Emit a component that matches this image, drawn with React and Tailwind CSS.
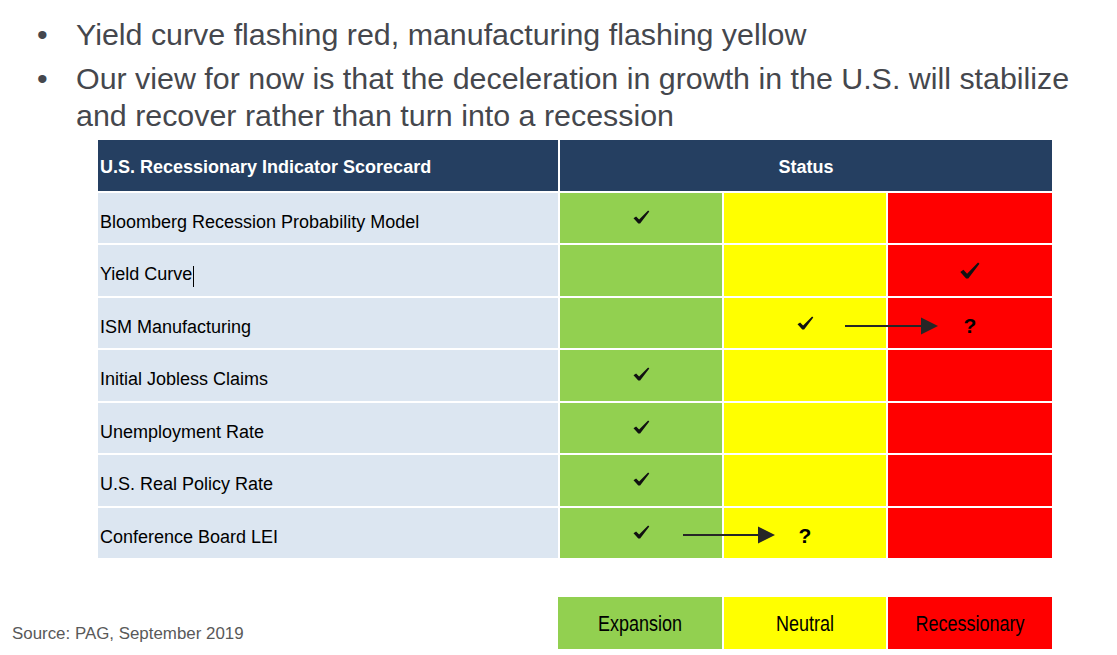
import React from "react";

const Check = ({ big }) => (
  <svg
    width={big ? 20 : 17}
    height={big ? 17 : 14}
    viewBox="0 0 16 14"
    className="block"
  >
    <path d="M0 8.2 L2.6 6.4 L5.6 9.6 L14.6 0.4 L15.8 1.4 L6.6 13.6 L4.8 13.6 Z" fill="#111" />
  </svg>
);

const Arrow = ({ left, top, width }) => (
  <svg
    className="absolute"
    style={{ left, top }}
    width={width}
    height={18}
    viewBox={`0 0 ${width} 18`}
  >
    <line x1="0" y1="9" x2={width - 16} y2="9" stroke="#262626" strokeWidth="2" />
    <polygon points={`${width - 17},0.5 ${width},9 ${width - 17},17.5`} fill="#262626" />
  </svg>
);

const Q = () => (
  <span className="mt-[4px] font-bold text-[21px] leading-none text-black">?</span>
);

const rows = [
  { label: "Bloomberg Recession Probability Model", h: "h-[50px]", g: <Check /> },
  { label: "Yield Curve", h: "h-[51px]", r: <Check big />, cursor: true },
  { label: "ISM Manufacturing", h: "h-[50px]", y: <Check />, r: <Q />, arrow: { left: 747, top: 19, width: 93 } },
  { label: "Initial Jobless Claims", h: "h-[51px]", g: <Check /> },
  { label: "Unemployment Rate", h: "h-[50px]", g: <Check /> },
  { label: "U.S. Real Policy Rate", h: "h-[51px]", g: <Check /> },
  { label: "Conference Board LEI", h: "h-[50px]", g: <Check />, y: <Q />, arrow: { left: 585, top: 18, width: 92 } },
];

export default function App() {
  return (
    <div className="w-[1117px] h-[655px] bg-white overflow-hidden font-['Liberation_Sans',Arial,sans-serif]">
      {/* bullets */}
      <div className="pt-[16px] text-[30.4px] text-[#45474d]">
        <div className="flex leading-[36px]">
          <span className="w-[76px] pl-[37px] shrink-0">•</span>
          <span className="w-[1020px]">Yield curve flashing red, manufacturing flashing yellow</span>
        </div>
        <div className="flex mt-[8px] leading-[37px]">
          <span className="w-[76px] pl-[37px] shrink-0">•</span>
          <span className="w-[1020px]">
            Our view for now is that the deceleration in growth in the U.S. will stabilize and recover rather than turn into a recession
          </span>
        </div>
      </div>

      {/* table */}
      <div className="ml-[98px] mt-[6px] flex flex-col gap-[2px] w-[954px]">
        <div className="grid grid-cols-[460px_492px] gap-[2px] h-[51px]">
          <div className="bg-[#253F61] flex items-center pl-[2px] pt-[3px] text-white font-bold text-[18px]">
            U.S. Recessionary Indicator Scorecard
          </div>
          <div className="bg-[#253F61] flex items-center justify-center pt-[3px] text-white font-bold text-[18px]">
            Status
          </div>
        </div>
        {rows.map((r, i) => (
          <div key={i} className={`relative grid grid-cols-[460px_162px_162px_164px] gap-[2px] ${r.h}`}>
            <div className="bg-[#DCE6F1] flex items-center pl-[2px] pt-[8px] text-[18px] text-black">
              {r.label}
              {r.cursor && <span className="inline-block w-px h-[21px] bg-black ml-px mt-[4px]"></span>}
            </div>
            <div className="bg-[#92D050] flex items-center justify-center pb-[3px]">{r.g}</div>
            <div className="bg-[#FFFF00] flex items-center justify-center">{r.y}</div>
            <div className="bg-[#FF0000] flex items-center justify-center">{r.r}</div>
            {r.arrow && <Arrow {...r.arrow} />}
          </div>
        ))}
      </div>

      {/* bottom */}
      <div className="mt-[39px] flex h-[52px]">
        <div className="w-[558px] pl-[12px] flex items-center">
          <span className="mt-[22px] text-[16.9px] text-[#595959]">Source: PAG, September 2019</span>
        </div>
        <div className="grid grid-cols-[164px_162px_164px] gap-[2px] text-[18px] text-black">
          <div className="bg-[#92D050] flex items-center justify-center pt-[3px]">
            <span className="inline-block scale-y-[1.2]">Expansion</span>
          </div>
          <div className="bg-[#FFFF00] flex items-center justify-center pt-[3px]">
            <span className="inline-block scale-y-[1.2]">Neutral</span>
          </div>
          <div className="bg-[#FF0000] flex items-center justify-center pt-[3px]">
            <span className="inline-block scale-y-[1.2]">Recessionary</span>
          </div>
        </div>
      </div>
    </div>
  );
}
